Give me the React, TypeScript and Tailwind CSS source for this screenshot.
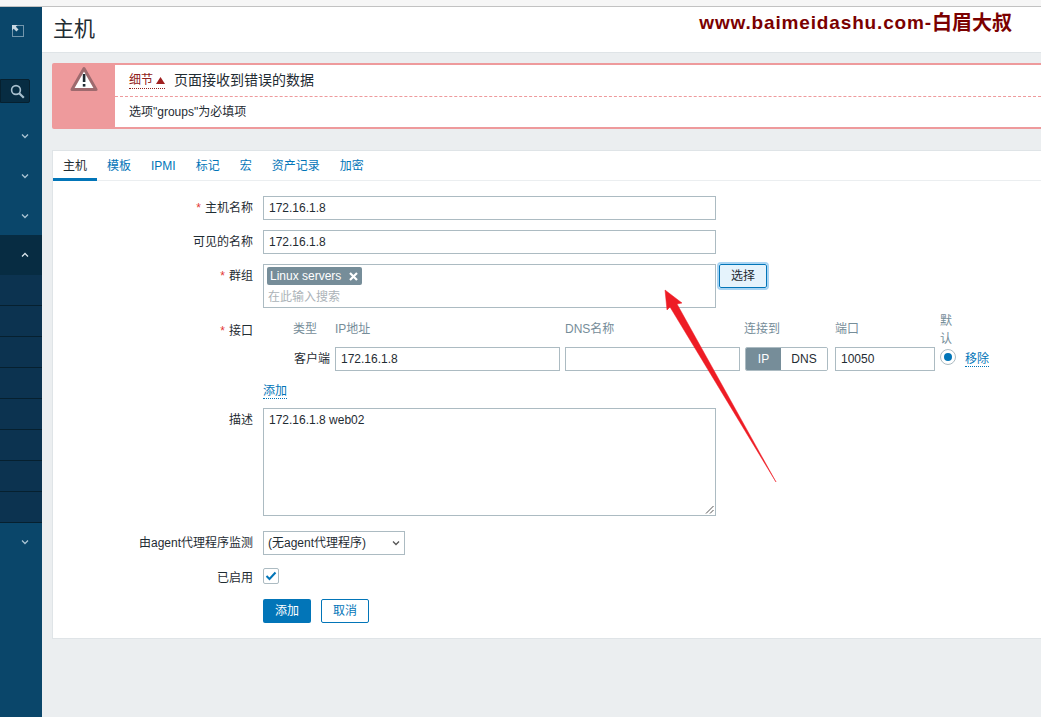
const font = "font-['Liberation_Sans','Noto_Sans_CJK_SC',sans-serif]";

function Chevron({ up = false, className = "" }: { up?: boolean; className?: string }) {
  return (
    <svg width="8" height="6" viewBox="0 0 8 6" className={`block ${className}`}>
      <path d={up ? "M1 4.5 L4 1.5 L7 4.5" : "M1 1.5 L4 4.5 L7 1.5"} fill="none" stroke="currentColor" strokeWidth="1.3" />
    </svg>
  );
}

function Sidebar() {
  const subItems = [0, 1, 2, 3, 4, 5, 6, 7];
  return (
    <aside className="w-[42px] shrink-0 bg-[#0a466a] flex flex-col text-[#a9c3d3]">
      <div className="h-[72px] pl-[12px] pt-[18px]">
        <svg width="12" height="12" viewBox="0 0 12 12" className="block">
          <rect x="0.5" y="0.5" width="11" height="11" fill="none" stroke="#dce7ee" strokeWidth="1" strokeDasharray="1 1" />
          <path d="M0 0 H5.5 L3.8 1.7 L6.5 4.4 L4.4 6.5 L1.7 3.8 L0 5.5 Z" fill="#c9d8e2" />
        </svg>
      </div>
      <div className="h-[24px] w-[30px] bg-[#072c42] border border-[#06202f] rounded-r-[2px] flex items-center justify-end pr-[4px]">
        <svg width="15" height="15" viewBox="0 0 15 15">
          <circle cx="6" cy="6" r="4.4" fill="none" stroke="#a9c0cf" strokeWidth="1.6" />
          <path d="M9.2 9.2 L13.8 13.8" stroke="#a9c0cf" strokeWidth="2.2" />
        </svg>
      </div>
      <div className="h-[30px]" />
      <div className="pl-[21px]"><Chevron /></div>
      <div className="h-[34px]" />
      <div className="pl-[21px]"><Chevron /></div>
      <div className="h-[34px]" />
      <div className="pl-[21px]"><Chevron /></div>
      <div className="h-[16px]" />
      <div className="h-[40px] bg-[#072c42] pl-[21px] flex items-center text-[#dbe6ec]"><Chevron up /></div>
      {subItems.map((i) => (
        <div key={i} className="h-[31px] bg-[#0c3350] border-b border-[#06202f]" />
      ))}
      <div className="h-[16px]" />
      <div className="pl-[21px]"><Chevron /></div>
    </aside>
  );
}

function Row({ label, required = false, children }: { label: string; required?: boolean; children: React.ReactNode }) {
  return (
    <div className="flex items-start">
      <div className="w-[200px] h-[24px] leading-[24px] text-right text-[#1f2c33] shrink-0 whitespace-nowrap">
        {required && <span className="text-[#e33734] mr-[4px]">*</span>}
        {label}
      </div>
      <div className="ml-[10px]">{children}</div>
    </div>
  );
}

function TextBox({ value, className = "" }: { value: string; className?: string }) {
  return (
    <div className={`h-[24px] border border-[#acbbc2] bg-white px-[5px] leading-[22px] text-[#1f2c33] ${className}`}>
      {value}
    </div>
  );
}

function InterfaceBlock() {
  return (
    <div className="flex flex-col">
      <div className="flex items-center h-[29px] text-[#768d99] -mt-[5px]">
        <span className="w-[30px]" />
        <span className="w-[42px]">类型</span>
        <span className="w-[230px]">IP地址</span>
        <span className="w-[179px]">DNS名称</span>
        <span className="w-[91px]">连接到</span>
        <span className="w-[105px]">端口</span>
        <span className="w-[14px] mt-[2px] leading-[18px] break-all">默认</span>
      </div>
      <div className="flex items-center h-[24px] mt-[4px]">
        <span className="w-[72px] pl-[31px] text-[#1f2c33] whitespace-nowrap">客户端</span>
        <TextBox value="172.16.1.8" className="w-[225px]" />
        <TextBox value="" className="w-[175px] ml-[5px]" />
        <div className="flex h-[24px] w-[83px] ml-[5px] border border-[#acbbc2] rounded-[2px] overflow-hidden">
          <span className="w-[35px] bg-[#768d99] text-white text-center leading-[22px]">IP</span>
          <span className="flex-1 bg-white text-[#1f2c33] text-center leading-[22px]">DNS</span>
        </div>
        <TextBox value="10050" className="w-[100px] ml-[7px]" />
        <span className="ml-[5px] -mt-[4px] w-[16px] h-[16px] rounded-full border border-[#acbbc2] flex items-center justify-center">
          <span className="w-[8px] h-[8px] rounded-full bg-[#0275b8]" />
        </span>
        <span className="ml-[9px] text-[#0275b8] border-b border-dotted border-[#0275b8] leading-[14px]">移除</span>
      </div>
      <div className="mt-[11px] h-[15px]">
        <span className="text-[#0275b8] border-b border-dotted border-[#0275b8] leading-[14px] inline-block">添加</span>
      </div>
    </div>
  );
}

function HostForm() {
  return (
    <div className="pt-[15px] pb-[15px] flex flex-col">
      <Row label="主机名称" required>
        <TextBox value="172.16.1.8" className="w-[453px]" />
      </Row>
      <div className="h-[10px]" />
      <Row label="可见的名称">
        <TextBox value="172.16.1.8" className="w-[453px]" />
      </Row>
      <div className="h-[10px]" />
      <Row label="群组" required>
        <div className="flex items-start">
          <div className="w-[453px] h-[44px] border border-[#acbbc2] px-[3px] pt-[2px]">
            <span className="inline-flex items-center h-[18px] bg-[#768d99] text-white rounded-[2px] pl-[3px] pr-[3px] w-[95px] justify-between">
              <span>Linux servers</span>
              <svg width="9" height="9" viewBox="0 0 9 9" className="mr-[1px]">
                <path d="M1 1 L8 8 M8 1 L1 8" stroke="#ffffff" strokeWidth="2.2" />
              </svg>
            </span>
            <div className="text-[#acb3b8] pl-[1px] leading-[18px] mt-[3px]">在此输入搜索</div>
          </div>
          <button className="ml-[3px] w-[48px] h-[24px] border border-[#0275b8] rounded-[2px] bg-[#e5f3fc] text-[#1f2c33] outline-2 outline-[#a8d4f3]">
            选择
          </button>
        </div>
      </Row>
      <div className="h-[11px]" />
      <Row label="接口" required>
        <InterfaceBlock />
      </Row>
      <div className="h-[11px]" />
      <Row label="描述">
        <div className="relative w-[453px] h-[108px] border border-[#acbbc2] px-[5px] pt-[4px] text-[#1f2c33] leading-[15px]">
          172.16.1.8 web02
          <svg width="9" height="9" viewBox="0 0 9 9" className="absolute right-[1px] bottom-[1px]">
            <path d="M8.5 1 L1 8.5 M8.5 5 L5 8.5" stroke="#555" strokeWidth="1" />
          </svg>
        </div>
      </Row>
      <div className="h-[15px]" />
      <Row label="由agent代理程序监测">
        <div className="w-[142px] h-[24px] border border-[#acbbc2] pl-[4px] pr-[4px] flex items-center justify-between text-[#1f2c33]">
          <span>(无agent代理程序)</span>
          <Chevron className="text-[#555]" />
        </div>
      </Row>
      <div className="h-[11px]" />
      <Row label="已启用">
        <div className="mt-[2px] w-[16px] h-[16px] border border-[#acbbc2] rounded-[2px] flex items-center justify-center">
          <svg width="12" height="10" viewBox="0 0 12 10">
            <path d="M1.5 5 L4.5 8 L10.5 1.5" fill="none" stroke="#0275b8" strokeWidth="2" />
          </svg>
        </div>
      </Row>
      <div className="h-[9px]" />
      <Row label="">
        <div className="flex gap-[10px]">
          <button className="w-[48px] h-[24px] bg-[#0275b8] text-white rounded-[2px]">添加</button>
          <button className="w-[48px] h-[24px] bg-white border border-[#0275b8] text-[#0275b8] rounded-[2px]">取消</button>
        </div>
      </Row>
    </div>
  );
}

export default function App() {
  const tabs = ["模板", "IPMI", "标记", "宏", "资产记录", "加密"];
  return (
    <div className={`${font} relative w-[1041px] h-[717px] overflow-hidden bg-[#ebeef0] text-[12px] flex flex-col`}>
      <div className="h-[7px] shrink-0 bg-[#f6f6f6] border-b border-[#c2c2c2]" />
      <div className="flex flex-1 min-h-0">
        <Sidebar />
        <main className="flex-1 min-w-0 flex flex-col">
          <header className="h-[46px] shrink-0 bg-white border-b border-[#dfe4e7] pl-[11px] flex items-center justify-between">
            <h1 className="text-[21px] font-normal text-[#1f2c33] -mt-[2px]">主机</h1>
            <div className="flex items-end font-bold text-[#7b0000] mr-[29px] -mt-[14px] whitespace-nowrap">
              <span className="text-[19px] tracking-[0.85px] leading-[20px]">www.baimeidashu.com-</span>
              <span className="text-[20px] leading-[20px]">白眉大叔</span>
            </div>
          </header>

          <div className="ml-[10px] mt-[10px] h-[66px] shrink-0 bg-[#ee9a9c] rounded-l-[2px] flex pt-[2px] pb-[2px]">
            <div className="w-[63px] shrink-0 flex justify-center pt-[1px]">
              <svg width="28" height="26" viewBox="0 0 28 26">
                <path d="M14 2.5 L26 23.5 H2 Z" fill="#ffffff" stroke="#9e6a6e" strokeWidth="3" strokeLinejoin="round" />
                <rect x="12.8" y="8" width="2.6" height="8" fill="#1f2c33" />
                <rect x="12.8" y="18" width="2.6" height="2.6" fill="#1f2c33" />
              </svg>
            </div>
            <div className="flex-1 bg-white">
              <div className="h-[32px] border-b border-dashed border-[#ee9a9c] pl-[14px] flex items-center">
                <span className="text-[#8f2020] border-b border-dotted border-[#8f2020] leading-[15px] flex items-center">
                  细节
                  <svg width="9" height="7" viewBox="0 0 9 7" className="ml-[3px]"><path d="M4.5 0 L9 7 H0 Z" fill="#a02020" /></svg>
                </span>
                <span className="ml-[9px] text-[14px] text-[#1f2c33]">页面接收到错误的数据</span>
              </div>
              <div className="pl-[14px] pt-[8px] text-[#1f2c33] leading-[15px]">选项"groups"为必填项</div>
            </div>
          </div>

          <section className="ml-[10px] mt-[21px] h-[489px] shrink-0 bg-white border border-[#dfe4e7] border-r-0 flex flex-col">
            <div className="h-[30px] border-b border-[#ebeef0] flex items-stretch gap-[20px] shrink-0">
              <span className="w-[44px] mr-[-10px] text-center text-[#1f2c33] leading-[30px] border-b-[3px] border-[#0275b8] h-[30px]">主机</span>
              {tabs.map((t) => (
                <span key={t} className="text-[#0275b8] leading-[30px]">
                  {t}
                </span>
              ))}
            </div>
            <HostForm />
          </section>
        </main>
      </div>

      {/* red arrow drawn over the screenshot */}
      <svg width="130" height="210" viewBox="0 0 130 210" className="absolute left-[660px] top-[285px] pointer-events-none">
        <path d="M5 5 L22 18 L17 19 L116 197 L10 22 L7 25 Z" fill="#ee1c25" stroke="#ee1c25" strokeWidth="0.5" strokeLinejoin="round" />
      </svg>
    </div>
  );
}
